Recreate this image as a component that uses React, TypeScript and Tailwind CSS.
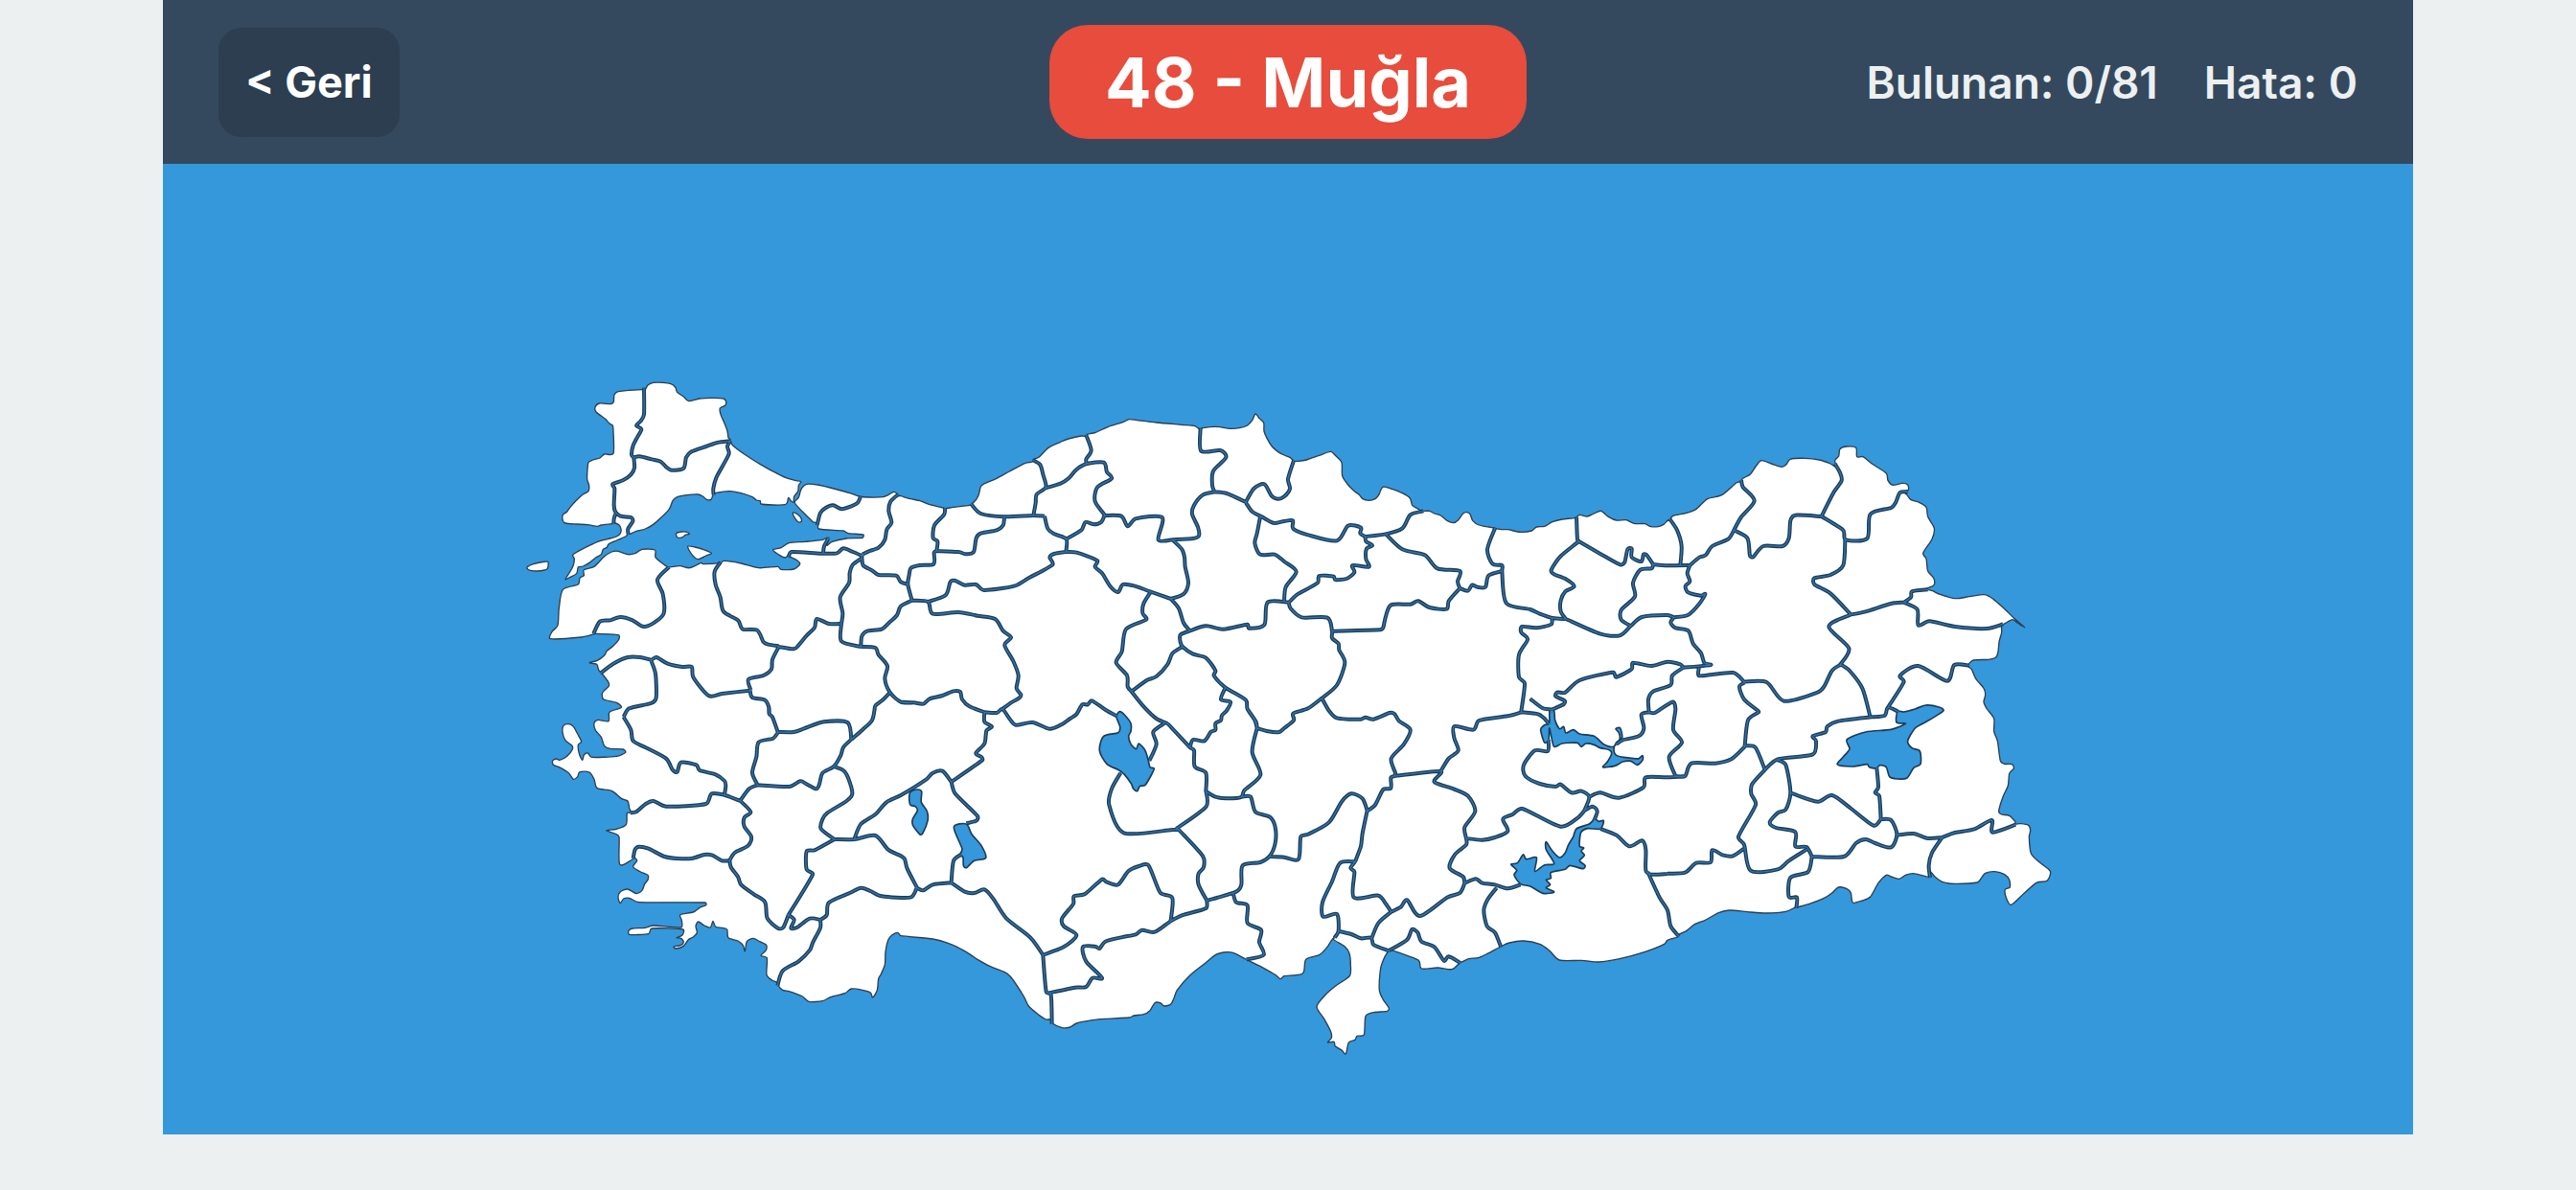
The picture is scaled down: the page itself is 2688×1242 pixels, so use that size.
import React, { useMemo, useState } from 'react';

/* --------------------------------- Types --------------------------------- */
type Point = [number, number];
type Sheet = { dx: number; dy: number; lines: string[] };
type Section = { dx: number; dy: number; points: string };

/* -------------------------------- Helpers -------------------------------- */
const parse = (s: string, dx = 0, dy = 0): Point[] =>
  s
    .trim()
    .split(/\s+/)
    .map((p) => {
      const [x, y] = p.split(',').map(Number);
      return [x + dx, y + dy];
    });

// Catmull-Rom through the points, slightly tightened so corners stay crisp
const smooth = (pts: Point[], closed = false): string => {
  const n = pts.length;
  const at = (i: number): Point =>
    closed ? pts[(i + n) % n] : pts[Math.max(0, Math.min(n - 1, i))];
  const k = 0.14;
  let d = `M${pts[0][0]} ${pts[0][1]}`;
  const last = closed ? n : n - 1;
  for (let i = 0; i < last; i++) {
    const [p0, p1, p2, p3] = [at(i - 1), at(i), at(i + 1), at(i + 2)];
    const len = Math.hypot(p2[0] - p1[0], p2[1] - p1[1]);
    // limit each handle to a third of its own segment
    const handle = (a: Point, b: Point): Point => {
      const vx = (b[0] - a[0]) * k;
      const vy = (b[1] - a[1]) * k;
      const m = Math.hypot(vx, vy);
      const f = m > len / 3 ? len / 3 / m : 1;
      return [vx * f, vy * f];
    };
    const h1 = handle(p0, p2);
    const h2 = handle(p1, p3);
    const c = [p1[0] + h1[0], p1[1] + h1[1], p2[0] - h2[0], p2[1] - h2[1], p2[0], p2[1]];
    d += `C${c.map((v) => v.toFixed(1)).join(' ')}`;
  }
  return closed ? `${d}Z` : d;
};

/* -------------------------------- Map data -------------------------------- */
const THRACE =
  '392,50 340,53 315,56 303,66 301,88 292,95 256,93 243,105 246,120 262,132 275,142 288,156 298,162 300,180 300,250 272,252 258,264 236,270 222,278 219,300 218,330 224,350 222,368 205,378 185,396 165,418 155,432 142,442 142,460 150,468 185,471 220,473 250,478 262,474 296,470 305,468 318,474 324,486 322,500 310,510 290,516 258,524 225,538 190,556 173,568 178,580 174,602 162,624 150,644 165,637 185,626 190,606 205,603 225,592 245,576 262,566 268,550 280,544 285,534 310,522 338,510 346,502 352,502 370,494 400,486 425,472 450,450 475,424 486,398 500,386 530,380 565,378 580,384 592,394 606,394 612,380 618,374 640,370 665,368 700,374 735,386 748,396 760,398 762,408 800,411 838,410 845,402 848,388 856,398 864,402 866,385 878,368 880,350 887,338 868,334 840,326 800,306 760,284 710,252 685,234 670,220 666,206 660,200 657,180 648,155 636,128 634,108 650,100 653,88 645,78 610,76 570,78 536,86 520,72 500,58 494,42 480,32 455,28 425,28 408,36 400,50';

const ISLANDS = [
  '30,610 32,604 50,596 70,591 95,589 94,610 85,615 60,618 40,616',
  '497,500 515,495 530,496 538,502 525,505 520,510 510,514 500,512',
  '533,541 555,543 580,550 607,562 590,570 565,581 545,565',
  '862,436 870,436 885,448 889,462 880,465 868,452',
];

// Clockwise from the Bosphorus
const ANATOLIA: Section[] = [
  {
    dx: 0,
    dy: 0,
    points:
      '868,405 880,388 888,362 905,346 940,348 990,360 1040,374 1070,384 1100,387 1145,386 1160,380 1178,370 1188,376 1192,382',
  },
  {
    dx: 1200,
    dy: 0,
    points:
      '0,383 30,392 60,398 90,410 125,418 140,422 165,418 215,412 222,408 236,394 244,378 250,354 262,344 300,328 340,306 390,280 412,276 415,268 432,262 462,232 500,214 525,204 565,195 578,196 582,190 610,184 650,166 695,152 715,143 740,146 800,153 880,160 920,164 936,174 945,170 985,166 1030,172 1060,170 1085,162 1100,146 1110,126 1122,140 1136,154 1137,180 1146,202 1162,228 1180,244',
  },
  {
    dx: 2400,
    dy: 0,
    points:
      '0,255 18,262 30,273 45,274 70,270 110,256 145,244 160,256 180,278 182,320 200,348 222,370 234,378 246,392 265,397 285,392 296,380 309,355 340,362 370,374 394,390 401,412 420,424 433,430 455,430 470,438 490,444 510,460 530,467 545,458 560,438 572,434 582,440 590,460 610,474 640,480 660,484 680,488 700,488 740,496 775,492 790,480 815,478 840,464 870,456 912,451 925,442 948,447 970,438 992,430 1015,448 1040,459 1070,458 1095,469 1130,470 1145,478 1170,479 1188,472',
  },
  {
    dx: 3600,
    dy: 0,
    points:
      '0,460 8,458 12,450 20,444 60,436 90,424 125,392 170,380 215,342 228,338 236,328 260,314 278,288 294,272 325,282 358,292 372,284 384,268 430,265 475,270 510,282 528,292 524,272 536,258 540,236 560,228 590,232 593,260 612,260 640,282 685,312 690,334 705,349 735,343 752,348 754,364 740,370 750,380 762,395 785,402 810,418 815,448 835,484 828,518 800,562 810,580 815,618 833,640 834,662 810,674 830,680 850,690 900,704 945,698 992,692 1020,706 1050,732 1085,766 1118,794 1095,780 1080,770 1060,780 1046,790 1046,810 1038,840 1035,870 1028,888 1005,895 958,897 940,914 952,926 965,955 990,985 995,1005 990,1028',
  },
  {
    dx: 3600,
    dy: 1050,
    points:
      '1000,0 1022,30 1022,70 1033,100 1042,162 1055,172 1078,173 1084,186 1070,202 1066,240 1050,275 1037,320 1045,330 1070,334 1088,352 1090,360 1105,359 1130,364 1136,380 1132,400 1138,452 1165,480 1198,508 1188,538 1155,544 1115,578 1076,613 1060,590 1057,565 1072,558 1070,535 1055,518 1025,509 995,514 982,530 970,543 900,547 862,542 838,526 822,508 820,526 770,515 745,520 725,532 700,525 685,520 660,545 635,588 610,600 580,606 574,575 560,562 535,558 515,576 490,592 450,608 408,620 398,622 370,634 310,639 250,635 195,630 160,638 120,660 85,674 60,694 36,706 32,714 0,724',
  },
  {
    dx: 2400,
    dy: 1050,
    points:
      '1190,736 1130,760 1050,782 985,792 930,787 862,786 830,756 800,736 750,726 705,732 678,744 640,764 610,778 578,782 560,790 549,795 525,815 480,810 430,813 422,788 385,772 345,758 330,754 322,764 312,782 302,812 298,880 310,910 328,936 322,946 280,950 255,962 250,1020 228,1024 222,1036 202,1044 193,1080 180,1068 160,1056 156,1042 136,1044 148,1030 146,1010 125,970 102,932 130,894 165,864 205,836 208,800 204,765 190,744 155,722 160,712 150,722 135,745 110,770 68,784 58,828 0,836',
  },
  {
    dx: 1200,
    dy: 1050,
    points:
      '1188,845 1175,834 1130,808 1085,786 1070,778 1040,763 1010,762 985,770 950,798 905,834 865,880 855,905 845,924 825,930 812,920 795,920 780,944 760,956 730,960 715,966 640,970 600,974 550,984 530,996 505,998 474,984 468,972 455,972 430,956 400,930 385,900 345,840 325,824 280,806 240,784 200,758 150,734 100,720 0,710',
  },
  {
    dx: 0,
    dy: 1050,
    points:
      '1190,700 1172,708 1160,724 1152,760 1150,800 1138,830 1130,845 1126,880 1112,903 1105,888 1080,880 1045,876 1025,890 980,902 955,914 912,916 892,900 850,884 830,880 816,866 812,856 798,850 780,832 781,780 762,772 778,755 778,738 758,728 738,718 718,728 712,758 706,740 690,726 660,716 656,690 640,685 620,682 612,664 604,684 585,678 566,666 558,680 562,700 550,714 535,722 520,742 495,750 490,744 510,740 520,730 512,718 498,716 516,708 518,690 420,687 410,704 350,706 348,694 360,687 400,685 425,678 512,684 514,662 510,644 550,636 570,622 590,614 588,606 380,605 350,592 332,594 322,608 315,590 322,572 345,564 372,578 390,568 398,548 408,535 408,520 385,510 362,494 374,475 366,466 355,474 320,486 318,400 305,390 278,380 310,376 340,362 343,326 356,325 350,310 345,288 325,280 295,256 250,248 240,220 225,198 195,197 188,212 175,220 160,200 130,182 112,175 110,162 122,156 132,160 155,148 172,126 170,114 150,98 141,72 144,52 160,47 175,55 188,78 200,102 190,112 193,140 203,160 208,144 220,138 232,151 310,148 338,136 330,126 290,124 272,116 262,88 244,66 240,44 252,34 285,38 288,10',
  },
  {
    dx: 0,
    dy: 0,
    points:
      '325,1045 310,1030 270,1020 265,1002 272,992 286,978 284,965 262,936 254,928 248,910 225,905 250,898 272,882 280,868 300,852 318,830 316,818 245,814 238,816 200,825 103,830 108,808 126,788 130,735 142,676 190,660 195,640 208,632 208,614 240,604 270,574 295,558 315,556 345,566 370,562 390,550 430,552 432,575 455,595 472,606 488,604 510,602 540,608 575,592 580,596 632,593 648,586 700,594 755,608 815,604 825,613 865,612 884,596 875,584 855,574 850,568 838,576 820,568 800,552 825,545 850,530 900,526 950,521 975,514 968,538 985,526 1030,516 1080,514 1082,504 1035,500 1020,492 943,486 940,468 925,464',
  },
];

// Province borders, grouped by the sheet they were digitised on
const BORDERS: Sheet[] = [
  {
    dx: 0,
    dy: 0,
    lines: [
      '396,44 396,128 386,148 372,162 388,174 378,194 362,225 357,255 364,262',
      '364,262 382,259 420,268 448,275 465,292 482,302 520,296 528,262 545,244 590,228 625,216 666,211',
      '364,262 366,295 355,316 330,334 298,346 304,360 302,410 306,432 322,446 355,450 361,462 346,486 347,503',
      '306,440 302,455 301,470',
      '666,211 657,228 662,250 645,284 622,326 613,360 614,380',
      '938,474 948,436 965,420 988,412 1015,424 1045,415 1065,404 1074,384',
      '1192,378 1168,400 1162,430 1171,466 1156,488 1150,520 1130,545 1100,556 1080,566',
      '848,574 858,558 950,563 1000,562 1020,547 1050,558 1078,570',
      '972,518 960,540 957,562',
      '1078,570 1082,600 1110,616 1130,630 1185,632 1200,652 1222,660',
      '1078,578 1050,598 1040,624 1038,655 1010,700 1018,750 1014,783',
      '1014,783 975,783 937,768 930,795 905,820 880,850 865,862 818,855',
      '1014,783 1014,838 1075,855',
      '1075,852 1078,822 1095,806 1140,800 1165,778 1188,756 1200,728 1235,710',
      '1075,855 1120,858 1130,880 1158,915 1150,955 1166,998 1200,1028 1240,1030',
      '1166,998 1145,1020 1120,1040 1118,1052',
      '474,606 438,645 455,690 458,750 430,778 395,792 360,772 322,762 290,772 258,776 238,814',
      '636,590 617,620 620,660 635,700 645,745 690,772 705,800 750,803 770,840 785,848 818,853',
      '818,855 798,895 795,925 770,945 723,957 730,990',
      '260,938 300,908 345,888 385,888 418,896 435,888 470,908 515,918 545,918 550,950 598,1008 640,1002 728,992',
      '418,898 432,940 434,1015 418,1032 350,1048 332,1075',
      '728,992 735,1014 775,1022 787,1045 788,1065',
    ],
  },
  {
    dx: 0,
    dy: 1050,
    lines: [
      '332,25 355,65 362,100 400,120 465,155 485,190 500,197 512,167 560,175 570,192 620,205 648,225 652,240 648,268',
      '787,-4 788,15 798,25 815,72',
      '815,72 865,72 900,60 960,40 1033,42 1045,95',
      '1045,95 1080,65 1110,35 1118,0',
      '815,74 800,92 755,104 748,150 735,200 752,238',
      '1045,95 1020,120 1012,145 990,180 955,200 945,235 935,250 905,235 885,226 850,243 752,238',
      '752,238 725,250 698,286',
      '990,180 1020,192 1035,215 1048,265 1030,288 970,325 955,345 950,375 992,408',
      '353,325 372,322 400,298 425,288 465,305 590,297 608,265 650,270 698,288',
      '698,288 730,322 710,340 710,368 732,400 722,428 680,450 664,474',
      '362,468 368,440 380,431 410,437 460,462 500,468 545,468 585,456 610,458 640,475 664,474',
      '664,474 668,495 690,525 700,550 740,580 775,605 782,655 815,686 832,684 848,645',
      '848,645 924,518 905,502 905,446 930,442 992,408',
      '848,645 866,660 856,686 875,684 915,656 948,660',
      '992,408 1055,408 1120,396 1160,440 1200,460 1212,470 1220,500 1250,558',
      '1055,405 1075,360 1120,330 1155,292 1200,270 1280,220 1300,200 1330,194 1358,228',
      '948,660 948,685 925,730 915,755 880,790 830,820 814,866',
      '948,660 968,645 975,606 1040,576 1075,560 1105,570 1140,586 1230,590 1250,560',
    ],
  },
  {
    dx: 1200,
    dy: 0,
    lines: [
      '138,420 136,440 105,475 101,515 115,525 112,555',
      '112,555 180,558 205,565 228,558 236,515 250,500 300,490 320,475 324,450',
      '220,408 250,438 324,448 415,444 450,446',
      '112,555 104,560 103,596 60,600 32,608 26,630 22,660 35,710',
      '35,710 85,714 100,752 180,747 240,758 295,768 320,805 345,826 325,850 352,900 368,945 362,985 376,1005 370,1016 345,1030 318,1050',
      '85,714 140,694 155,652 170,648 200,662 235,660 260,678 355,665 400,640 475,598 466,575 480,564 517,558',
      '413,270 436,285 445,315 454,355 425,378 422,405 415,444',
      '454,358 500,344 525,328 550,300 582,282 635,278 645,308 660,328 615,356 608,400 638,442',
      '582,282 580,268 596,240 580,192',
      '450,446 460,485 480,502 518,518 517,558',
      '518,518 565,490 578,465 605,472 628,464 638,442',
      '638,444 690,446 710,478 735,454 818,450 806,520 850,520',
      '517,558 550,560 615,585 608,605 630,625 655,665 680,684 695,660 730,664 780,682 845,705',
      '850,520 915,516 933,508 930,480 912,440 918,412 945,380 982,370',
      '850,520 880,550 888,575 890,605 900,655 885,690 845,705',
      '845,705 870,735 885,780 905,805',
      '782,684 760,720 757,750 768,770 705,800 692,870 674,905 708,945 710,980 722,995',
      '722,995 770,960 800,948 835,910 850,876 882,855',
      '905,805 875,818 875,840 882,855 915,878 955,890 985,930 980,945 1015,982 1080,1022 1085,1050 1108,1085 1115,1110',
      '1015,985 1002,1020 1032,1028 1020,1055 1005,1070 1002,1085 985,1095 985,1115 970,1122 950,1150 915,1146 905,1170',
      '722,995 760,1042 800,1080 835,1095',
      '905,805 955,790 1010,800 1085,785 1090,797 1138,786 1148,716 1214,716',
      '938,170 940,242 1000,240 1018,262 978,305 975,350 982,370',
      '982,370 1020,375 1080,402',
      '1080,402 1105,360 1138,346 1160,382 1180,392 1200,385 1218,360 1212,330 1230,272',
      '1080,404 1100,432 1130,448 1150,460 1170,468 1200,462 1227,460 1228,485 1275,505 1365,523 1400,476 1440,482 1438,500 1454,510',
      '1125,448 1115,500 1108,530 1120,562 1135,568 1170,566 1200,588 1238,620 1205,668 1200,714',
      '0,1028 40,1030 70,1034 90,1018 130,1008 165,994 186,996 192,1020 215,1042 262,1060',
      '262,1060 300,1062 318,1050 340,1080 360,1100 412,1092 465,1112 500,1100 530,1080 550,1066 568,1036 585,1036 598,1024 640,1052 680,1074',
    ],
  },
  {
    dx: 1200,
    dy: 1050,
    lines: [
      '50,560 70,568 100,550 158,544',
      '158,544 165,475 190,455',
      '158,544 200,572 230,576 262,565 290,595 330,655 405,715 445,770',
      '158,228 170,265 240,335 236,350 205,358',
      '158,228 255,160 252,150 235,138 262,108 268,68 285,55 262,40 262,10',
      '445,770 510,745 550,708 510,680 505,655 540,610 542,586 575,580 630,533 645,542 680,550 712,508 745,492 775,489 812,575 850,592 845,662',
      '445,770 455,885 470,895 473,986',
      '460,890 545,872 580,870 600,842 630,842 580,790 570,745 610,744 622,750 640,728 690,715 735,706 755,692 795,698 845,664 880,646 955,624 958,600',
      '958,600 932,550 932,515 948,495 945,460 870,378',
      '862,375 956,305 955,255',
      '870,378 850,378 698,388 652,300 660,250 688,200',
      '955,258 955,200 920,180 918,130 905,120 835,45',
      '825,45 790,72 800,110 778,162',
      '955,258 985,275 1020,280 1065,276 1075,255 1126,206 1100,135 1115,60',
      '1115,60 1150,70 1185,72 1200,60 1230,35 1228,14 1275,-2 1318,-34',
      '1068,275 1095,275 1110,322 1155,338 1172,370 1172,420 1155,460 1125,480 1070,490 1066,550 1050,572 958,600',
      '1155,462 1200,464 1245,470 1252,400 1275,392 1340,355 1380,290 1410,265 1445,280 1460,318',
      '1040,575 1050,605 1085,615 1085,670 1128,692 1122,730 1136,770 1082,784',
    ],
  },
  {
    dx: 2400,
    dy: 0,
    lines: [
      '2,714 14,716 40,692 105,655 110,633 155,635 160,645 195,642 220,622 214,600 265,605 256,580 258,548 276,538 256,525 254,510',
      '254,510 318,502 370,484 395,442 436,430',
      '318,502 370,550 440,568 480,610 550,618 543,650 550,672',
      '550,672 575,680 588,662 605,668 630,668 640,632 682,618',
      '661,482 636,550 652,595 682,600 682,618 695,718 770,738 800,752 840,765 882,768',
      '550,672 515,712 508,737 455,732 420,712 395,722 335,724 318,760 310,795 300,802 150,806',
      '14,716 20,735 55,763 135,764 150,806 150,828 170,845 172,865 190,905 165,975 118,1016',
      '838,766 836,785 790,796 745,792 742,810 762,832 735,880 735,950 753,970 742,1058',
      '915,449 918,520 922,525 865,572 836,615 845,628 880,642 908,666 880,682 866,710 866,745 882,768',
      '922,525 1000,570 1052,598 1066,590 1075,550 1088,548 1088,575 1118,588 1125,566 1135,568 1155,597',
      '1155,597 1200,601 1270,600',
      '1155,600 1150,610 1115,614 1092,655 1098,698 1055,740 1055,770 1085,790',
      '882,768 990,815 1050,820 1085,790 1120,762 1200,756 1220,763',
      '118,1016 140,1055 165,1078 240,1082 255,1076 280,1082 330,1062 345,1065 360,1088 395,1115 375,1160 335,1205 348,1250 345,1260',
      '742,1060 700,1072 610,1086 592,1115 533,1104 532,1140 545,1180 515,1205 490,1245',
      '742,1060 795,1066 815,1080 830,1098',
      '770,1018 810,1048 838,1052 838,1062',
      '838,1052 875,1035 878,1024 850,1010 855,998 880,998 925,960 1030,935 1040,950 1088,925 1092,905 1150,915 1200,902 1240,910 1250,920',
      '1250,920 1215,945 1210,975 1155,995 1140,1020 1142,1060',
      '1142,1060 1160,1062 1215,1028 1225,1050 1218,1115 1245,1155 1205,1200 1225,1260',
    ],
  },
  {
    dx: 2400,
    dy: 1050,
    lines: [
      '1142,10 1118,18 1126,60 1110,85 1060,97 1040,110',
      '345,210 490,195 470,228 530,250 575,272 598,320 565,370 570,405',
      '345,210 334,215 334,248 310,252 285,300 262,318',
      '260,318 245,390 240,430 222,478',
      '222,478 175,482 150,540 120,605 122,650 165,642 170,695 158,716',
      '222,478 208,498 220,510 218,590 295,584 318,610 335,635',
      '335,635 295,670 275,715',
      '170,695 210,705 240,718 272,716 280,738 327,757',
      '335,635 365,620 385,598 425,648 510,590 550,576 565,545',
      '570,405 570,425 535,455 518,498 560,525 565,545',
      '570,405 620,410 660,402 700,382 685,345 715,330 745,312 865,368 920,340 940,318',
      '940,318 955,275 930,257 900,262 865,236 850,243 800,234 755,210 750,175 785,130 825,132 827,95',
      '955,275 990,262 1048,278 1125,245 1132,214 1200,214 1255,210',
      '565,545 600,532 620,545 660,550 700,562 740,550',
      '665,560 638,595 625,630 635,680 660,700 679,746',
      '327,757 385,722 400,690 418,700 430,728 470,745 500,788 515,775 552,795',
      '940,318 965,305 980,320 970,350',
      '990,375 1040,395 1080,430 1120,412 1132,440 1132,505 1150,518 1200,516',
      '1138,510 1175,590 1200,630 1210,680 1236,712',
    ],
  },
  {
    dx: 3600,
    dy: 0,
    lines: [
      '6,454 30,490 44,540 40,600',
      '70,600 100,575 120,568 140,540 190,518 208,490',
      '208,490 230,450 272,398 236,355 231,334',
      '208,490 250,515 258,570 268,574 300,540 360,540 380,515 385,460 400,443 482,447',
      '482,447 520,372 545,335 540,310 524,282',
      '482,447 550,490 558,520 625,516 635,440 700,420 715,402 728,372 752,370',
      '556,520 550,600 510,630 460,640 460,660 510,688 572,752',
      '70,600 62,625 70,650 56,665 65,685 105,695 118,690 100,720 65,755 20,763',
      '20,763 10,780 25,796 65,805 80,845 105,875 115,905 135,912 50,920',
      '98,922 100,946 205,936 240,965',
      '240,965 310,966 365,1025 470,998 490,980 515,930 540,912',
      '240,968 225,980 240,1020 283,1055 285,1060 252,1085 242,1165',
      '540,912 568,860 505,792 572,755',
      '572,755 620,745 700,720 740,716',
      '740,716 762,700 765,682 815,676',
      '740,716 782,738 785,788 820,775 900,792 1000,798 1050,784',
      '545,912 570,930 610,985 634,1072',
      '690,1045 740,965 728,945 785,915 875,962 898,912 945,914',
      '722,1058 690,1045 680,1070 640,1075',
    ],
  },
  {
    dx: 3600,
    dy: 1050,
    lines: [
      '640,25 535,38 500,55 495,72 455,85 465,100 455,142 345,157 305,190',
      '242,115 275,120 305,190',
      '242,118 200,157 150,170 75,170 55,210 25,210',
      '305,190 265,235 262,265 276,300 222,400 240,425 260,506 345,502 380,475 435,440',
      '0,515 55,512 90,482 135,480 140,442 175,458 205,460 238,438',
      '345,160 370,175 385,262 370,315 345,325 320,355 340,372 400,385 400,430 435,432 452,462',
      '385,262 470,290 515,270 575,312 645,365 668,345',
      '668,345 663,272 650,262 660,245 655,185',
      '668,345 700,348 718,392 700,433 650,420 620,408 590,420 552,462 452,462',
      '452,462 440,510 385,528 380,588 405,590 403,624',
      '718,395 770,390 815,405 860,402',
      '860,402 900,387 960,376 1015,348 1018,386 1090,362',
      '860,402 828,450 818,490 822,528',
    ],
  },
  {
    dx: 2400,
    dy: 1050,
    lines: ['-85,60 -88,40 -115,0'],
  },
];

const LAKES: Sheet[] = [
  {
    dx: 1200,
    dy: 1050,
    lines: [
      '685,8 700,18 720,45 720,70 713,85 720,110 737,125 745,108 765,130 775,162 780,182 793,186 785,205 765,238 748,242 740,257 728,250 722,235 700,205 680,190 645,172 622,130 635,85 680,74 686,55 675,25',
      '30,260 50,252 65,258 64,292 82,320 84,350 68,390 60,393 38,365 37,345 52,318 45,305 30,300 26,275',
      '166,370 205,360 222,392 252,428 266,466 230,475 205,497 196,490 195,465 186,455 192,438',
    ],
  },
  {
    dx: 2400,
    dy: 1050,
    lines: [
      '831,6 845,6 848,35 862,62 875,55 882,75 905,65 925,78 970,85 1000,110 1030,118 1050,95 1048,75 1038,62 1052,60 1058,90 1040,105 1032,125 1040,145 1070,152 1095,155 1110,155 1122,146 1122,160 1105,175 1085,163 1060,165 1035,178 998,182 1012,165 1025,140 1018,128 990,122 970,112 945,108 930,118 918,106 870,108 845,118 835,80 830,60 828,95 815,105 803,65 815,50 830,45',
      '915,375 955,360 972,345 985,352 1000,350 990,375 950,374 930,385 925,410 925,430 938,435 930,445 940,458 925,475 942,490 935,500 895,490 880,502 835,512 835,530 820,535 833,550 820,560 845,573 810,577 770,555 740,548 720,520 728,505 710,486 730,482 748,456 758,470 790,465 785,508 815,488 845,484 820,440 820,416 840,445 862,465 880,450 890,425 905,400',
    ],
  },
  {
    dx: 3600,
    dy: 1050,
    lines: [
      '720,8 740,9 775,0 808,-12 850,-6 864,5 835,25 800,45 775,60 752,100 765,122 790,132 792,172 770,185 750,216 720,219 695,212 685,182 665,176 655,185 632,182 625,173 580,180 532,174 550,150 570,125 562,95 620,72 700,64 745,46 717,42',
    ],
  },
];

const TOTAL = 81;

/* ----------------------------------- Map ---------------------------------- */
const TurkeyMap: React.FC = () => {
  const land = useMemo(
    () =>
      [
        smooth(parse(THRACE), true),
        ...ISLANDS.map((s) => smooth(parse(s), true)),
        smooth(
          ANATOLIA.flatMap((s) => parse(s.points, s.dx, s.dy)),
          true
        ),
      ].join(''),
    []
  );

  const borders = useMemo(
    () =>
      BORDERS.flatMap((s) => s.lines.map((l) => smooth(parse(l, s.dx, s.dy)))).join(''),
    []
  );

  const lakes = useMemo(
    () =>
      LAKES.flatMap((s) => s.lines.map((l) => smooth(parse(l, s.dx, s.dy), true))).join(''),
    []
  );

  return (
    <svg
      viewBox="-1110 -657 7044 3039"
      className="block h-auto w-full"
      strokeLinejoin="round"
      aria-hidden="true"
    >
      <path d={land} fill="#fff" stroke="#2c3e50" strokeWidth={4} />
      <path d={borders} fill="none" stroke="#1f3a55" strokeWidth={12} />
      <path d={lakes} fill="#3498db" stroke="#1f3a55" strokeWidth={5} />
      <path d={borders} fill="none" stroke="#2b78b0" strokeWidth={4} strokeLinecap="round" />
    </svg>
  );
};

/* ----------------------------------- App ---------------------------------- */
const App: React.FC = () => {
  const [found] = useState(0);
  const [errors] = useState(0);

  return (
    <div className="min-h-screen bg-[#ecf0f1] px-[170px] font-['Inter','Liberation_Sans',sans-serif]">
      <main className="bg-[#3498db]">
        <header className="grid grid-cols-[1fr_auto_1fr] items-center bg-[#34495e] px-[58px] py-[26px]">
          <button
            type="button"
            className="cursor-pointer justify-self-start rounded-3xl bg-[#2c3e50] px-7 py-[30px] text-[45px] leading-[54px] font-bold text-white"
          >
            &lt; Geri
          </button>

          <h1 className="rounded-[40px] bg-[#e74c3c] px-[58px] py-4 text-[72px] leading-[87px] font-bold text-white">
            48 - Muğla
          </h1>

          <div className="flex gap-12 justify-self-end text-[46px] leading-[54px] font-semibold text-[#ecf0f1]">
            <span>
              Bulunan: {found}/{TOTAL}
            </span>
            <span>Hata: {errors}</span>
          </div>
        </header>

        <TurkeyMap />
      </main>
    </div>
  );
};

export default App;
